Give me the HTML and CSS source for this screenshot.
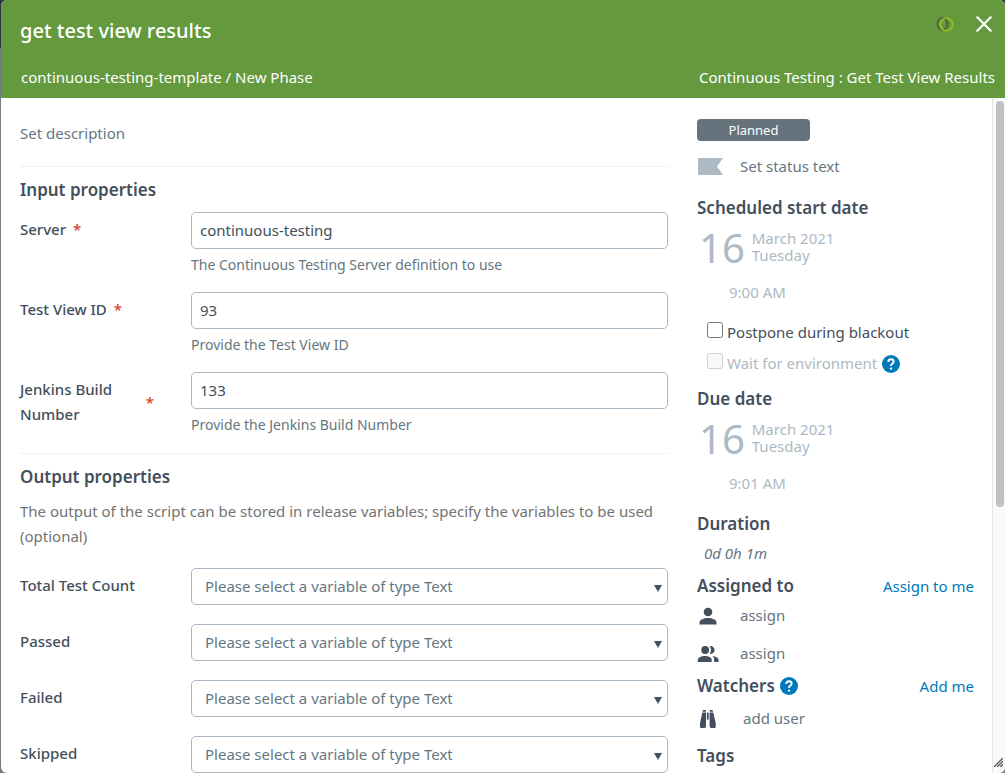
FILE: index.html
```html
<!DOCTYPE html>
<html lang="en">
<head>
<meta charset="utf-8">
<meta name="viewport" content="width=device-width, initial-scale=1">
<title>get test view results</title>
<link rel="stylesheet" href="styles.css">
</head>
<body>
<div class="modal" role="dialog" aria-labelledby="task-title">
  <header class="modal-header">
    <div class="header-row">
      <h1 class="title" id="task-title">get test view results</h1>
      <div class="header-tools">
        <svg class="task-logo" viewBox="0 0 18 16" aria-hidden="true">
          <ellipse cx="6.5" cy="8" rx="5" ry="6" fill="none" stroke="#55663f" stroke-width="2"/>
          <circle cx="10.5" cy="8.5" r="6.2" fill="none" stroke="#93c020" stroke-width="2"/>
          <path d="M9 2.8C12 5.500 12 11 9 13.500" fill="none" stroke="#55663f" stroke-width="1.600"/>
        </svg>
        <button class="close" type="button" aria-label="Close">
          <svg viewBox="0 0 16 16" aria-hidden="true"><path d="M1.300 1.300 14.700 14.700M14.700 1.300 1.300 14.700" fill="none" stroke="#fff" stroke-width="2.200" stroke-linecap="round"/></svg>
        </button>
      </div>
    </div>
    <div class="header-row header-sub">
      <span>continuous-testing-template / New Phase</span>
      <span>Continuous Testing : Get Test View Results</span>
    </div>
  </header>

  <div class="modal-body">
    <main class="details">
      <p class="description">Set description</p>

      <section class="section">
        <h2 class="heading">Input properties</h2>
        <div class="field">
          <label class="label" for="server"><span>Server</span><span class="required">*</span></label>
          <div class="control">
            <input class="box" id="server" type="text" value="continuous-testing">
            <p class="help">The Continuous Testing Server definition to use</p>
          </div>
        </div>
        <div class="field">
          <label class="label" for="view-id"><span>Test View ID</span><span class="required">*</span></label>
          <div class="control">
            <input class="box" id="view-id" type="text" value="93">
            <p class="help">Provide the Test View ID</p>
          </div>
        </div>
        <div class="field">
          <label class="label" for="build"><span>Jenkins Build Number</span><span class="required">*</span></label>
          <div class="control">
            <input class="box" id="build" type="text" value="133">
            <p class="help">Provide the Jenkins Build Number</p>
          </div>
        </div>
      </section>

      <section class="section">
        <h2 class="heading">Output properties</h2>
        <p class="intro">The output of the script can be stored in release variables; specify the variables to be used (optional)</p>
        <div class="outputs">
          <div class="field">
            <label class="label" for="total">Total Test Count</label>
            <div class="select"><select class="box" id="total"><option>Please select a variable of type Text</option></select></div>
          </div>
          <div class="field">
            <label class="label" for="passed">Passed</label>
            <div class="select"><select class="box" id="passed"><option>Please select a variable of type Text</option></select></div>
          </div>
          <div class="field">
            <label class="label" for="failed">Failed</label>
            <div class="select"><select class="box" id="failed"><option>Please select a variable of type Text</option></select></div>
          </div>
          <div class="field">
            <label class="label" for="skipped">Skipped</label>
            <div class="select"><select class="box" id="skipped"><option>Please select a variable of type Text</option></select></div>
          </div>
        </div>
      </section>
    </main>

    <aside class="sidebar">
      <span class="status">Planned</span>
      <div class="side-row">
        <svg class="flag" viewBox="0 0 25 17" aria-hidden="true"><path d="M1 0H25L19 8.500 25 17H1Q0 17 0 16V1Q0 0 1 0Z" fill="#adb9c3"/></svg>
        <span>Set status text</span>
      </div>

      <h2 class="heading">Scheduled start date</h2>
      <div class="date">
        <span class="day">16</span>
        <span class="month">March 2021<br>Tuesday</span>
      </div>
      <p class="time">9:00 AM</p>
      <div class="checks">
        <div class="check">
          <input type="checkbox" id="postpone"><label for="postpone">Postpone during blackout</label>
        </div>
        <div class="check disabled">
          <input type="checkbox" id="wait" disabled><label for="wait">Wait for environment</label>
          <svg class="help-icon" viewBox="0 0 18 18" role="img" aria-label="Help"><circle cx="9" cy="9" r="9" fill="#0079bc"/><path d="M6.300 6.900C6.300 5.200 7.400 4.200 9 4.200S11.700 5.200 11.700 6.700C11.700 8.500 9 8.700 9 10.900" fill="none" stroke="#fff" stroke-width="1.900"/><circle cx="9" cy="13.600" r="1.200" fill="#fff"/></svg>
        </div>
      </div>

      <h2 class="heading">Due date</h2>
      <div class="date">
        <span class="day">16</span>
        <span class="month">March 2021<br>Tuesday</span>
      </div>
      <p class="time">9:01 AM</p>

      <h2 class="heading heading-duration">Duration</h2>
      <p class="duration">0d 0h 1m</p>

      <div class="heading-row">
        <h2 class="heading">Assigned to</h2>
        <a class="link" href="#assign">Assign to me</a>
      </div>
      <div class="people">
        <div class="side-row">
          <svg class="icon" viewBox="0 0 22 20" aria-hidden="true"><circle cx="11" cy="6" r="4.300" fill="#434f5c"/><path d="M2.500 18.500V16.500C2.500 13.500 7 12 11 12S19.500 13.500 19.500 16.500V18.500Z" fill="#434f5c"/></svg>
          <span>assign</span>
        </div>
        <div class="side-row">
          <svg class="icon" viewBox="0 0 22 20" aria-hidden="true"><circle cx="8.200" cy="6" r="3.900" fill="#434f5c"/><path d="M.800 18V15.800C.800 13.200 5 12 8 12S14.700 13.200 14.700 15.800V18Z" fill="#434f5c"/><path d="M12.800 2.200A3.900 3.900 0 1 1 12.800 9.800C14.300 7.600 14.300 4.400 12.800 2.200Z" fill="#434f5c"/><path d="M15.400 12.300C18 12.500 21.500 13.500 21.500 16V18H17.200V15.800C17.200 14.200 16.600 13.300 15.400 12.300Z" fill="#434f5c"/></svg>
          <span>assign</span>
        </div>
      </div>

      <div class="heading-row">
        <h2 class="heading">Watchers</h2>
        <svg class="help-icon" viewBox="0 0 18 18" role="img" aria-label="Help"><circle cx="9" cy="9" r="9" fill="#0079bc"/><path d="M6.300 6.900C6.300 5.200 7.400 4.200 9 4.200S11.700 5.200 11.700 6.700C11.700 8.500 9 8.700 9 10.900" fill="none" stroke="#fff" stroke-width="1.900"/><circle cx="9" cy="13.600" r="1.200" fill="#fff"/></svg>
        <a class="link" href="#watch">Add me</a>
      </div>
      <div class="side-row watcher">
        <svg class="icon" viewBox="0 0 22 20" aria-hidden="true"><g fill="#434f5c"><rect x="5.700" y="1" width="3.300" height="1.800" rx=".5"/><rect x="12.600" y="1" width="3.300" height="1.800" rx=".5"/><path d="M5.300 3.600H9V16.500Q9 19 7.500 19H4Q3 19 3 18V14Z"/><path d="M16.300 3.600H12.600V16.500Q12.600 19 14 19H17.700Q18.700 19 18.700 18V14Z"/><rect x="9.900" y="3.600" width="1.800" height="7"/></g></svg>
        <span>add user</span>
      </div>

      <h2 class="heading">Tags</h2>
    </aside>

    <div class="scroll-track" aria-hidden="true">
      <div class="scroll-thumb"></div>
      <svg class="grip" viewBox="0 0 10 10"><path d="M0 10 10 0M3.500 10 10 3.500M7 10 10 7" fill="none" stroke="#555" stroke-width="1.500"/></svg>
    </div>
  </div>
</div>
</body>
</html>
```
FILE: styles.css
```css
* {
  box-sizing: border-box;
}

body {
  margin: 0;
  background: linear-gradient(#2e3440 0 48px, #747b84 48px);
  color: #434f5c;
  font: 15px/25px "Noto Sans", "Open Sans", sans-serif;
}

h1,
h2,
p {
  margin: 0;
}

.modal {
  display: flex;
  flex-direction: column;
  height: 100vh;
  margin-left: 1px;
  overflow: hidden;
  border-radius: 6px;
  background: #fff;
}

.modal-header {
  flex: none;
  padding: 8px 10px 4px 19px;
  background: #64993d;
  color: #fff;
}

.header-row {
  display: flex;
  align-items: center;
  justify-content: space-between;
}

.title {
  padding-top: 1px;
  font-size: 20px;
  font-weight: 500;
  line-height: 44px;
}

.header-tools {
  display: flex;
  align-items: center;
  gap: 22px;
  align-self: flex-start;
  height: 31px;
  padding-right: 3px;
}

.task-logo {
  width: 18px;
  height: 16px;
}

.close {
  width: 16px;
  height: 16px;
  padding: 0;
  border: 0;
  background: none;
}

.close svg {
  display: block;
}

.header-sub {
  padding-top: 8px;
  padding-left: 1px;
  line-height: 33px;
}

.modal-body {
  display: flex;
  flex: 1;
  min-height: 0;
}

.details {
  flex: 1;
  min-width: 0;
  padding-left: 19px;
}

.description {
  padding: 23px 0 20px;
  color: #667680;
}

.section {
  padding-bottom: 1px;
  border-top: 1px solid #eef0f1;
}

.heading {
  font-size: 17px;
  font-weight: 600;
  line-height: 26px;
}

.section > .heading {
  padding: 10px 0 9px;
}

.field {
  display: grid;
  grid-template-columns: 171px 1fr;
  padding-right: 1px;
}

.label {
  display: flex;
  align-items: center;
  align-self: start;
  gap: 7px;
  padding: 5px 37px 0 0;
  font-weight: 500;
}

.required {
  color: #d9402f;
}

.box {
  display: block;
  width: 100%;
  height: 37px;
  padding: 0 8px 2px;
  border: 1px solid #a9b7c4;
  border-radius: 5px;
  background: #fff;
  color: #434f5c;
  font: inherit;
}

.help {
  padding-top: 3px;
  padding-bottom: 15px;
  color: #667680;
  font-size: 14px;
}

.intro {
  padding-bottom: 19px;
  color: #737373;
}

.outputs {
  display: grid;
  gap: 19px;
}

.select {
  position: relative;
}

.select .box {
  padding: 0 24px 0 13px;
  appearance: none;
  color: #667680;
}

.select::after {
  position: absolute;
  top: 17px;
  right: 6px;
  border: solid transparent;
  border-width: 7px 4px 0;
  border-top-color: #434f5c;
  content: "";
  pointer-events: none;
}

.sidebar {
  flex: none;
  width: 295px;
  padding: 21px 18px 0 0;
  margin-left: 28px;
}

.status {
  display: block;
  width: 113px;
  border-radius: 4px;
  background: #66737c;
  color: #fff;
  font-size: 13px;
  line-height: 22px;
  text-align: center;
}

.side-row {
  display: grid;
  grid-template-columns: 43px 1fr;
  align-items: center;
  color: #667680;
}

.status + .side-row {
  padding: 13px 0 16px;
}

.flag {
  width: 25px;
  height: 17px;
  margin-left: 1px;
}

.date {
  display: flex;
  gap: 7px;
  padding: 6px 0 0 2px;
  color: #adb9c3;
}

.day {
  font-size: 40px;
  line-height: 42px;
}

.month {
  padding-top: 3px;
  line-height: 17px;
}

.time {
  padding: 11px 0 0 32px;
  color: #adb9c3;
}

.checks {
  padding: 12px 0 7px 10px;
}

.check {
  display: flex;
  align-items: center;
  height: 31px;
}

.check input {
  width: 16px;
  height: 16px;
  margin: 0 4px 5px 0;
}

.check.disabled {
  color: #adb9c3;
}

.help-icon {
  width: 18px;
  height: 18px;
  margin-left: 5px;
}

.heading-duration {
  padding-top: 15px;
}

.duration {
  padding: 4px 0 7px 7px;
  color: #667680;
  font-style: italic;
}

.heading-row {
  display: flex;
  align-items: center;
}

.link {
  margin-left: auto;
  color: #0079bc;
  text-decoration: none;
}

.people {
  display: grid;
  gap: 13px;
  padding: 4px 0 7px;
}

.icon {
  width: 22px;
  height: 20px;
}

.watcher {
  grid-template-columns: 46px 1fr;
  padding: 7px 0 12px;
}

.scroll-track {
  display: flex;
  flex: none;
  flex-direction: column;
  align-items: center;
  justify-content: space-between;
  width: 13px;
  padding: 3px 1px 6px 2px;
  border-left: 1px solid #e4e4e4;
  background: #fafafa;
}

.scroll-thumb {
  width: 8px;
  height: 61%;
  border-radius: 4px;
  background: #c1c1c1;
}

.grip {
  width: 9px;
  height: 9px;
  margin-right: 2px;
}
```
